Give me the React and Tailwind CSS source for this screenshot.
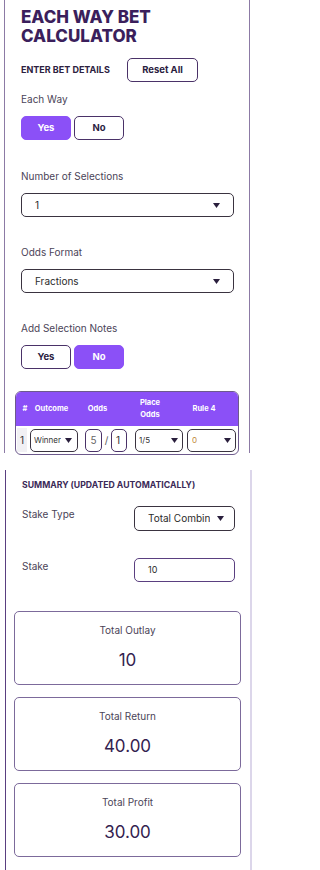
import React from 'react';

const Caret = () => (
  <svg width="7" height="5" viewBox="0 0 7 5" className="shrink-0">
    <path d="M0 0h7L3.5 5z" fill="#2a1f3d" />
  </svg>
);

const FakeSelect = ({ value, className = '', textClass = '' }) => (
  <div className={`shrink-0 flex items-center justify-between border border-[#3a3340] rounded-[5px] bg-white ${className}`}>
    <span className={`truncate ${textClass}`}>{value}</span>
    <Caret />
  </div>
);

const Toggle = ({ active }) => (
  <div className="flex gap-[3px]">
    {['Yes', 'No'].map((label) => (
      <button
        key={label}
        className={
          label === active
            ? 'w-[50px] h-[24px] rounded-[5px] bg-[#8b50f7] text-white text-[9.5px] font-bold border border-[#8b50f7]'
            : 'w-[50px] h-[24px] rounded-[5px] bg-white text-[#2b1d3f] text-[9.5px] font-bold border border-[#4a3268]'
        }
      >
        {label}
      </button>
    ))}
  </div>
);

const ResultCard = ({ label, value }) => (
  <div className="h-[74px] border border-[#7c6a9b] rounded-[5px] flex flex-col items-center pt-[11px]">
    <div className="text-[10px] text-[#4b4458]">{label}</div>
    <div className="text-[17px] text-[#33224f] mt-[14px] leading-none">{value}</div>
  </div>
);

export default function App() {
  return (
    <div className="bg-white w-[256px] h-[870px] overflow-hidden" style={{ fontFamily: 'Inter, "Noto Sans", sans-serif' }}>
      {/* bet details */}
      <div className="ml-[4px] w-[246px] h-[453px] border-x border-[#8c7aa5] pl-[16px] pr-[15px] pt-[8px]">
        <h1 className="text-[17px] leading-[19px] font-extrabold text-[#3b1f5c]">
          EACH WAY BET
          <br />
          CALCULATOR
        </h1>
        <div className="flex items-center mt-[12px]">
          <div className="text-[9px] font-bold text-[#2c2140] uppercase w-[106px] whitespace-nowrap">Enter Bet Details</div>
          <button className="w-[71px] h-[24px] border border-[#4a3268] rounded-[5px] text-[9.5px] font-bold text-[#2b1d3f]">
            Reset All
          </button>
        </div>

        <div className="text-[10px] text-[#4b4458] mt-[10px]">Each Way</div>
        <div className="mt-[9px]">
          <Toggle active="Yes" />
        </div>

        <div className="text-[10px] text-[#4b4458] mt-[29px]">Number of Selections</div>
        <FakeSelect value="1" className="mt-[9px] h-[24px] pl-[13px] pr-[13px]" textClass="text-[10px] text-[#2b2b2b]" />

        <div className="text-[10px] text-[#4b4458] mt-[28px]">Odds Format</div>
        <FakeSelect value="Fractions" className="mt-[9px] h-[24px] pl-[13px] pr-[13px]" textClass="text-[10px] text-[#2b2b2b]" />

        <div className="text-[10px] text-[#4b4458] mt-[28px]">Add Selection Notes</div>
        <div className="mt-[9px]">
          <Toggle active="No" />
        </div>

        {/* selections table */}
        <div className="-ml-[6px] w-[224px] mt-[22px] border border-[#6d5a8c] rounded-[6px] overflow-hidden">
          <div className="bg-[#8b50f7] h-[34px] flex items-center text-white text-[7.5px] font-bold whitespace-nowrap">
            <div className="w-[18px] shrink-0 text-center">#</div>
            <div className="w-[35px] shrink-0 text-center">Outcome</div>
            <div className="w-[57px] shrink-0 text-center">Odds</div>
            <div className="w-[48px] shrink-0 text-center leading-[12px]">
              Place
              <br />
              Odds
            </div>
            <div className="w-[60px] shrink-0 text-center">Rule 4</div>
          </div>
          <div className="flex items-center h-[28px]">
            <div className="ml-[1px] w-[10px] shrink-0 h-[24px] bg-[#f1f0f4] flex items-center justify-center text-[10px] text-[#333]">1</div>
            <FakeSelect value="Winner" className="ml-[3px] w-[48px] h-[23px] pl-[3px] pr-[5px]" textClass="text-[8px] text-[#333]" />
            <div className="ml-[7px] w-[17px] shrink-0 h-[23px] border border-[#4a3268] rounded-[5px] flex items-center justify-center text-[10px] text-[#666]">5</div>
            <div className="w-[9px] shrink-0 text-center text-[10px] text-[#555]">/</div>
            <div className="w-[16px] shrink-0 h-[23px] border border-[#4a3268] rounded-[5px] flex items-center pl-[4px] text-[10px] text-[#333]">1</div>
            <FakeSelect value="1/5" className="ml-[8px] w-[48px] h-[23px] pl-[3px] pr-[4px]" textClass="text-[8px] text-[#333]" />
            <FakeSelect value="0" className="ml-[4px] w-[49px] h-[23px] pl-[4px] pr-[4px]" textClass="text-[8px] text-[#c08a3a]" />
          </div>
        </div>
      </div>

      {/* summary */}
      <div className="mt-[17px] ml-[5px] w-[247px] h-[400px] border-l border-[#5a3f80] border-r-2 border-r-[#dcd6ea] pl-[16px] pr-[13px] pt-[9px]">
        <div className="text-[8.7px] font-bold text-[#3b2a57] uppercase whitespace-nowrap">Summary (Updated Automatically)</div>
        <div className="flex items-start mt-[14px]">
          <div className="text-[10px] text-[#4b4458] w-[112px] pt-[1px]">Stake Type</div>
          <div className="w-[101px] h-[25px] border border-[#3a3340] rounded-[5px] flex items-center pl-[13px]">
            <span className="text-[10px] text-[#2b2b2b] whitespace-nowrap overflow-hidden w-[62px]">Total Combined</span>
            <span className="ml-[7px] flex">
              <Caret />
            </span>
          </div>
        </div>
        <div className="flex items-start mt-[27px]">
          <div className="text-[10px] text-[#4b4458] w-[112px] pt-[1px]">Stake</div>
          <div className="w-[101px] h-[24px] border border-[#5a3f80] rounded-[5px] flex items-center pl-[13px] text-[9px] text-[#2b2b2b]">
            10
          </div>
        </div>

        <div className="-ml-[8px] w-[227px] mt-[29px] flex flex-col gap-[12px]">
          <ResultCard label="Total Outlay" value="10" />
          <ResultCard label="Total Return" value="40.00" />
          <ResultCard label="Total Profit" value="30.00" />
        </div>
      </div>
    </div>
  );
}
